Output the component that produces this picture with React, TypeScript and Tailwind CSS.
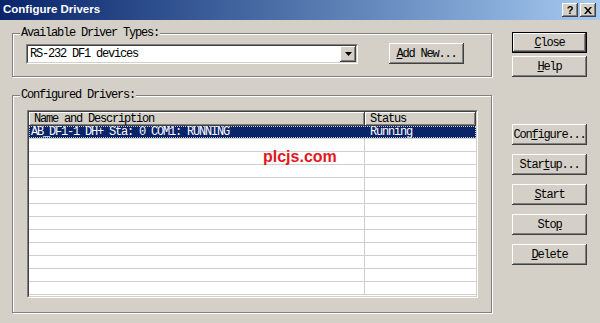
import React from 'react';

const raised =
  'shadow-[inset_-1px_-1px_0_#404040,inset_1px_1px_0_#ffffff,inset_-2px_-2px_0_#808080]';

function Btn({ children, def = false, className = '' }: { children: React.ReactNode; def?: boolean; className?: string }) {
  return (
    <div
      className={`flex h-[21px] w-[75px] items-center justify-center overflow-hidden whitespace-nowrap bg-[#d4d0c8] text-black ${
        def ? 'border border-black shadow-[inset_-1px_-1px_0_#404040,inset_1px_1px_0_#ffffff,inset_-2px_-2px_0_#808080]' : raised
      } ${className}`}>
      <span>{children}</span>
    </div>);

}

function GroupBox({ label, className = '', children }: { label: string; className?: string; children: React.ReactNode }) {
  return (
    <div className={`relative border border-[#808080] shadow-[1px_1px_0_#ffffff,inset_1px_1px_0_#ffffff] ${className}`}>
      <span className="absolute -top-[7px] left-[7px] bg-[#d4d0c8] px-[1px] leading-[13px]">{label}</span>
      {children}
    </div>);

}

const rows = Array.from({ length: 13 }, (_, i) => i);

export default function App() {
  return (
    <div className="h-[323px] w-[600px] overflow-hidden bg-[#d4d0c8] font-['Liberation_Mono',monospace] text-[12px] tracking-[-1.2px] text-black">
      {/* title bar */}
      <div className="flex h-[20px] items-center bg-linear-to-r from-[#0a246a] to-[#a6caf0] pl-[3px] pr-[4px]">
        <span className="font-['Liberation_Sans',sans-serif] text-[11.5px] font-bold tracking-normal text-white">
          Configure Drivers
        </span>
        <div className="ml-auto flex gap-[2px]">
          <div className={`flex h-[14px] w-[16px] items-center justify-center bg-[#d4d0c8] ${raised}`}>
            <span className="font-['Liberation_Sans',sans-serif] text-[11px] font-bold leading-none tracking-normal">?</span>
          </div>
          <div className={`flex h-[14px] w-[16px] items-center justify-center bg-[#d4d0c8] ${raised}`}>
            <svg width="8" height="7" viewBox="0 0 8 7">
              <path d="M0 0h2l2 2.5L6 0h2L5 3.5 8 7H6L4 4.5 2 7H0l3-3.5z" fill="#000" />
            </svg>
          </div>
        </div>
      </div>

      <div className="flex items-start pl-[12px]">
        {/* left column */}
        <div className="mt-[13px] flex w-[480px] flex-col">
          <GroupBox label="Available Driver Types:" className="h-[44px]">
            <div className="flex items-center pl-[13px] pt-[9px]">
              <div className="flex h-[20px] w-[332px] items-center border border-t-[#808080] border-l-[#808080] border-b-white border-r-white">
                <div className="flex h-full w-full items-center border border-t-[#404040] border-l-[#404040] border-b-[#d4d0c8] border-r-[#d4d0c8] bg-white">
                  <span className="pl-[2px]">RS-232 DF1 devices</span>
                  <div className={`ml-auto flex h-[16px] w-[16px] items-center justify-center bg-[#d4d0c8] ${raised}`}>
                    <svg width="7" height="4" viewBox="0 0 7 4">
                      <path d="M0 0h7L3.5 4z" fill="#000" />
                    </svg>
                  </div>
                </div>
              </div>
              <Btn className="ml-[31px]">
                <u>A</u>dd New...
              </Btn>
            </div>
          </GroupBox>

          <GroupBox label="Configured Drivers:" className="mt-[18px] h-[218px]">
            <div className="pl-[14px] pt-[14px]">
              <div className="relative h-[188px] w-[451px] border border-t-[#808080] border-l-[#808080] border-b-white border-r-white">
                <div className="h-full w-full overflow-hidden border border-t-[#404040] border-l-[#404040] border-b-[#d4d0c8] border-r-[#d4d0c8] bg-white">
                  <div className="flex h-[14px] leading-[14px]">
                    <div className={`w-[336px] bg-[#d4d0c8] pl-[5px] ${raised}`}>Name and Description</div>
                    <div className={`w-[111px] bg-[#d4d0c8] pl-[5px] ${raised}`}>Status</div>
                  </div>
                  {rows.map((i) =>
                  <div key={i} className="flex h-[13px] border-b border-[#cfcfcf] leading-[12px]">
                      {i === 0 ?
                    <div className="flex w-full bg-[#0a246a] text-white outline-1 -outline-offset-1 outline-dotted outline-[#c8c8c8]">
                          <div className="w-[336px] pl-[2px]">AB_DF1-1 DH+ Sta: 0 COM1: RUNNING</div>
                          <div className="w-[111px] pl-[5px]">Running</div>
                        </div> :

                    <>
                          <div className="w-[336px] border-r border-[#cfcfcf]" />
                          <div className="w-[110px]" />
                        </>
                    }
                    </div>
                  )}
                </div>
                <span className="absolute left-[235px] top-[38px] font-['Liberation_Sans',sans-serif] text-[16px] font-bold leading-none tracking-normal text-[#e3171e]">
                  plcjs.com
                </span>
              </div>
            </div>
          </GroupBox>
        </div>

        {/* right column */}
        <div className="ml-[20px] mt-[12px] flex flex-col">
          <Btn def>
            <u>C</u>lose
          </Btn>
          <Btn className="mt-[3px]">
            <u>H</u>elp
          </Btn>
          <Btn className="mt-[47px]">
            Con<u>f</u>igure...
          </Btn>
          <Btn className="mt-[9px]">
            Star<u>t</u>up...
          </Btn>
          <Btn className="mt-[9px]">
            <u>S</u>tart
          </Btn>
          <Btn className="mt-[9px]">
            Sto<u>p</u>
          </Btn>
          <Btn className="mt-[9px]">
            <u>D</u>elete
          </Btn>
        </div>
      </div>
    </div>);

}
